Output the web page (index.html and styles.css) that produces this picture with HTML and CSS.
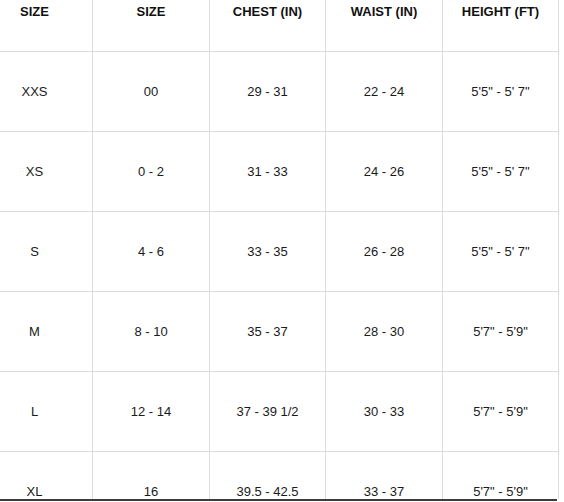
FILE: index.html
```html
<!DOCTYPE html>
<html>
<head>
<meta charset="utf-8">
<link rel="stylesheet" href="styles.css">
</head>
<body>
<div class="frame">
  <div class="chart">
    <div class="cell head">SIZE</div><div class="cell head">SIZE</div><div class="cell head">CHEST (IN)</div><div class="cell head">WAIST (IN)</div><div class="cell head">HEIGHT (FT)</div>
    <div class="cell">XXS</div><div class="cell">00</div><div class="cell">29 - 31</div><div class="cell">22 - 24</div><div class="cell">5'5" - 5' 7"</div>
    <div class="cell">XS</div><div class="cell">0 - 2</div><div class="cell">31 - 33</div><div class="cell">24 - 26</div><div class="cell">5'5" - 5' 7"</div>
    <div class="cell">S</div><div class="cell">4 - 6</div><div class="cell">33 - 35</div><div class="cell">26 - 28</div><div class="cell">5'5" - 5' 7"</div>
    <div class="cell">M</div><div class="cell">8 - 10</div><div class="cell">35 - 37</div><div class="cell">28 - 30</div><div class="cell">5'7" - 5'9"</div>
    <div class="cell">L</div><div class="cell">12 - 14</div><div class="cell">37 - 39 1/2</div><div class="cell">30 - 33</div><div class="cell">5'7" - 5'9"</div>
    <div class="cell">XL</div><div class="cell">16</div><div class="cell">39.5 - 42.5</div><div class="cell">33 - 37</div><div class="cell">5'7" - 5'9"</div>
  </div>
</div>
<div class="bottom-line"></div>
</body>
</html>
```
FILE: styles.css
```css
html, body {
  margin: 0;
  padding: 0;
  background: #fff;
}
body {
  font-family: "Liberation Sans", Arial, sans-serif;
  font-size: 13px;
  color: #1a1a1a;
}
.frame {
  width: 564px;
  height: 499px;
  overflow: hidden;
}
.chart {
  display: grid;
  grid-template-columns: 116px 117px 116px 117px 116px;
  grid-auto-rows: 80px;
  margin-left: -23px;
  margin-top: -28px;
  width: 582px;
}
.cell {
  box-sizing: border-box;
  border-right: 1px solid #dcdcdc;
  border-bottom: 1px solid #dcdcdc;
  display: flex;
  align-items: center;
  justify-content: center;
  white-space: nowrap;
}
.head {
  font-weight: bold;
  color: #111;
}
.bottom-line {
  width: 557px;
  height: 2px;
  background: #3c3c3c;
}
```
